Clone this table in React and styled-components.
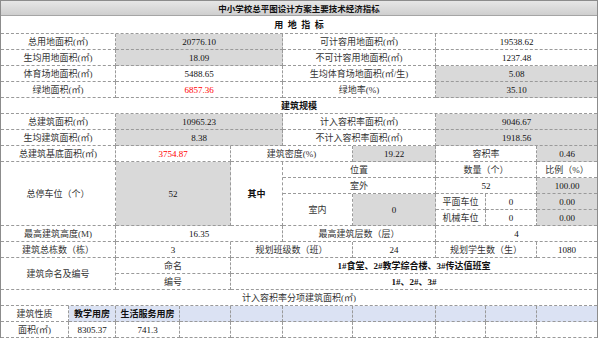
import React from "react";
import styled, { createGlobalStyle } from "styled-components";

const GlobalStyle = createGlobalStyle`
  html, body {
    margin: 0;
    padding: 0;
    background: #fff;
  }
  body {
    font-family: "Liberation Serif", "Noto Sans CJK SC", serif;
  }
`;

const Sheet = styled.div`
  display: grid;
  grid-template-columns: 68px 47px 64px 51px 52px 70px 83px 50px 51px 60px;
  grid-template-rows: 15px 18px repeat(19, 16px);
  width: 596px;
  border: 1px solid #8c8c8c;
  border-bottom: none;
  font-size: 9px;
  color: #333;
`;

const TitleBar = styled.div`
  grid-column: 1 / -1;
  display: flex;
  align-items: center;
  justify-content: center;
  box-sizing: border-box;
  background: linear-gradient(#e6e6e6, #cfcfcf);
  border-bottom: 1px solid #a5a5a5;
  font-size: 8.5px;
  font-weight: bold;
  color: #111;
`;

const tones = {
  gray: "#d9d9d9",
  blue: "#dbe2f3",
  plain: "#fff",
};

const Cell = styled.div`
  grid-column: span ${(p) => p.$span || 1};
  grid-row: span ${(p) => p.$rows || 1};
  display: flex;
  align-items: center;
  justify-content: center;
  box-sizing: border-box;
  border-bottom: 1px dashed #9a9a9a;
  border-right: ${(p) => (p.$end ? "none" : "1px dashed #9a9a9a")};
  background: ${(p) => tones[p.$tone || "plain"]};
  color: ${(p) => (p.$red ? "#f00" : "#333")};
  font-weight: ${(p) => (p.$bold ? "bold" : "normal")};
  white-space: nowrap;
  overflow: hidden;
`;

const Value = styled(Cell)`
  color: ${(p) => (p.$red ? "#f00" : "#111")};
`;

const Section = styled(Cell)`
  grid-column: 1 / -1;
  border-right: none;
  font-weight: ${(p) => (p.$plain ? "normal" : "bold")};
  color: ${(p) => (p.$plain ? "#333" : "#111")};
  letter-spacing: ${(p) => p.$spread || 0}px;
  padding-left: ${(p) => p.$spread || 0}px;
`;

const landRows = [
  ["总用地面积(㎡)", "20776.10", "gray", "可计容用地面积(㎡)", "19538.62", "plain"],
  ["生均用地面积(㎡)", "18.09", "gray", "不可计容用地面积(㎡)", "1237.48", "plain"],
  ["体育场地面积(㎡)", "5488.65", "plain", "生均体育场地面积(㎡/生)", "5.08", "gray"],
  ["绿地面积(㎡)", "6857.36", "plain", "绿地率(%)", "35.10", "gray", true],
];

const buildRows = [
  ["总建筑面积(㎡)", "10965.23", "gray", "计入容积率面积(㎡)", "9046.67", "gray"],
  ["生均建筑面积(㎡)", "8.38", "gray", "不计入容积率面积(㎡)", "1918.56", "gray"],
];

const PairRow = ({ row }) => {
  const [label, value, tone, label2, value2, tone2, red] = row;
  return (
    <>
      <Cell $span={2}>{label}</Cell>
      <Value $span={3} $tone={tone} $red={red}>
        {value}
      </Value>
      <Cell $span={2}>{label2}</Cell>
      <Value $span={3} $tone={tone2} $end>
        {value2}
      </Value>
    </>
  );
};

const usageTypes = ["教学用房", "生活服务用房", "", "", "", "", "", "", ""];
const usageAreas = ["8305.37", "741.3", "", "", "", "", "", "", ""];

export default function App() {
  return (
    <>
      <GlobalStyle />
      <Sheet>
        <TitleBar>中小学校总平图设计方案主要技术经济指标</TitleBar>
        <Section $spread={4.5}>用地指标</Section>
        {landRows.map((row) => (
          <PairRow key={row[0]} row={row} />
        ))}

        <Section>建筑规模</Section>
        {buildRows.map((row) => (
          <PairRow key={row[0]} row={row} />
        ))}

        <Cell $span={2}>总建筑基底面积(㎡)</Cell>
        <Value $span={2} $red>
          3754.87
        </Value>
        <Cell $span={2}>建筑密度(%)</Cell>
        <Value $tone="gray">19.22</Value>
        <Cell $span={2}>容积率</Cell>
        <Value $tone="gray" $end>
          0.46
        </Value>

        <Cell $span={2} $rows={4}>
          总停车位（个）
        </Cell>
        <Value $span={2} $rows={4} $tone="gray">
          52
        </Value>
        <Value $rows={4} $bold>
          其中
        </Value>
        <Cell $span={2}>位置</Cell>
        <Cell $span={2}>数量（个）</Cell>
        <Cell $end>比例（%）</Cell>
        <Cell $span={2}>室外</Cell>
        <Value $span={2}>52</Value>
        <Value $tone="gray" $end>
          100.00
        </Value>
        <Cell $rows={2}>室内</Cell>
        <Value $rows={2} $tone="gray">
          0
        </Value>
        <Cell>平面车位</Cell>
        <Value>0</Value>
        <Value $tone="gray" $end>
          0.00
        </Value>
        <Cell>机械车位</Cell>
        <Value>0</Value>
        <Value $tone="gray" $end>
          0.00
        </Value>

        <Cell $span={2}>最高建筑高度(M)</Cell>
        <Value $span={3}>16.35</Value>
        <Cell $span={2}>最高建筑层数（层）</Cell>
        <Value $span={3} $end>
          4
        </Value>

        <Cell $span={2}>建筑总栋数（栋）</Cell>
        <Value $span={2}>3</Value>
        <Cell $span={2}>规划班级数（班）</Cell>
        <Value>24</Value>
        <Cell $span={2}>规划学生数（生）</Cell>
        <Value $end>1080</Value>

        <Cell $span={2} $rows={2}>
          建筑命名及编号
        </Cell>
        <Cell $span={2}>命名</Cell>
        <Value $span={6} $end $bold>
          1#食堂、2#教学综合楼、3#传达值班室
        </Value>
        <Cell $span={2}>编号</Cell>
        <Value $span={6} $end $bold>
          1#、2#、3#
        </Value>

        <Section $plain>计入容积率分项建筑面积(㎡)</Section>

        <Cell>建筑性质</Cell>
        {usageTypes.map((name, i) => (
          <Value key={i} $tone="blue" $bold $end={i === usageTypes.length - 1}>
            {name}
          </Value>
        ))}
        <Cell>面积(㎡)</Cell>
        {usageAreas.map((area, i) => (
          <Value key={i} $end={i === usageAreas.length - 1}>
            {area}
          </Value>
        ))}
      </Sheet>
    </>
  );
}
